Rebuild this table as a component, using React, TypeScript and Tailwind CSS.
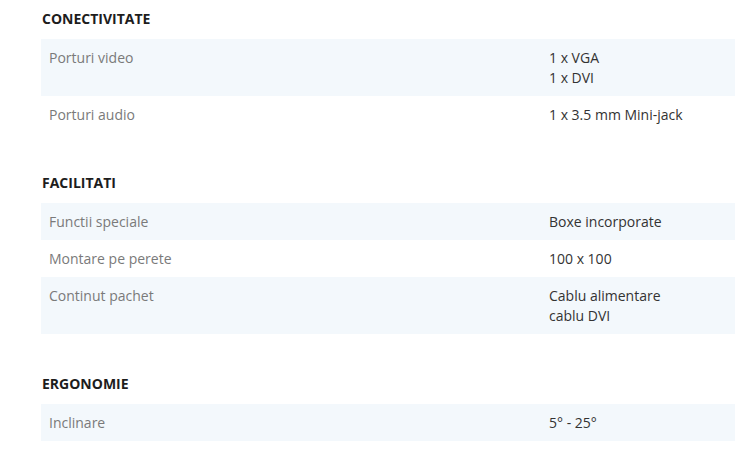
const sections = [
  {
    title: "CONECTIVITATE",
    rows: [
      { label: "Porturi video", values: ["1 x VGA", "1 x DVI"] },
      { label: "Porturi audio", values: ["1 x 3.5 mm Mini-jack"] },
    ],
  },
  {
    title: "FACILITATI",
    rows: [
      { label: "Functii speciale", values: ["Boxe incorporate"] },
      { label: "Montare pe perete", values: ["100 x 100"] },
      { label: "Continut pachet", values: ["Cablu alimentare", "cablu DVI"] },
    ],
  },
  {
    title: "ERGONOMIE",
    rows: [{ label: "Inclinare", values: ["5° - 25°"] }],
  },
];

export default function App() {
  return (
    <div
      className="w-[735px] h-[475px] overflow-hidden bg-white pt-[10px] pl-[41px]"
      style={{ fontFamily: '"Open Sans", sans-serif' }}
    >
      {sections.map((s, i) => (
        <section key={s.title} className={i > 0 ? "mt-[41px]" : ""}>
          {/* section title */}
          <h3 className="text-[14px] leading-[18px] font-bold text-[#1d1d1d] pl-px mb-[11px]">
            {s.title}
          </h3>

          <div className="w-[900px]">
            {s.rows.map((r, j) => (
              <div
                key={r.label}
                className={`flex text-[14px] leading-[20px] pt-[9px] pb-2 ${
                  j % 2 === 0 ? "bg-[#f3f8fc]" : "bg-white"
                }`}
              >
                <div className="w-[500px] px-2 text-[#7a7a7a]">{r.label}</div>
                <div className="flex-1 px-2 text-[#333333]">
                  {r.values.map((v) => (
                    <div key={v}>{v}</div>
                  ))}
                </div>
              </div>
            ))}
          </div>
        </section>
      ))}
    </div>
  );
}
